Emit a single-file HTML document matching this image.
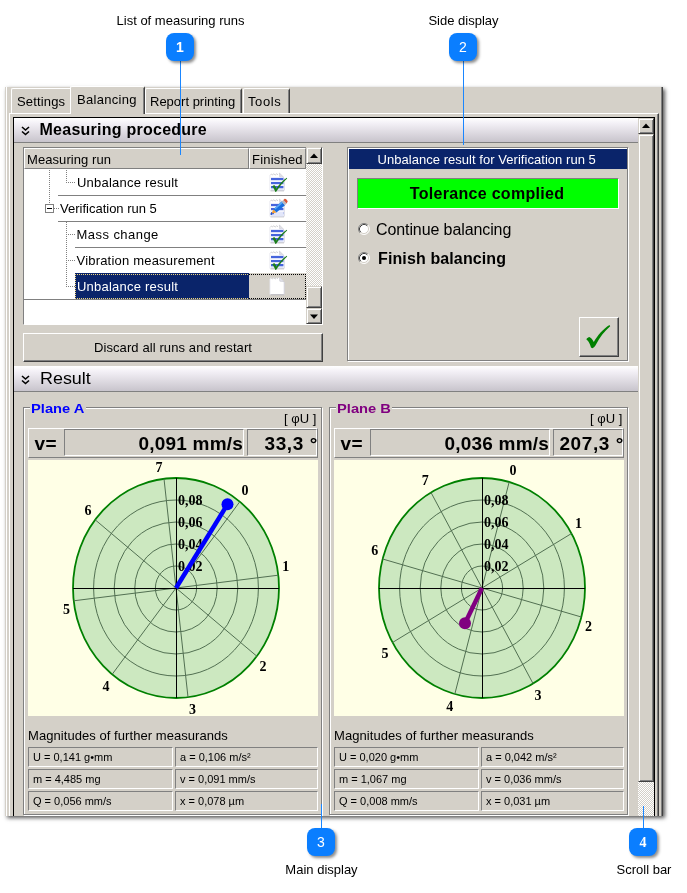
<!DOCTYPE html><html><head><meta charset="utf-8"><title>Balancing</title><style>
*{box-sizing:border-box;margin:0;padding:0}
html,body{width:687px;height:893px;background:#fff;overflow:hidden}
body{position:relative;font-family:"Liberation Sans",sans-serif;font-size:13px;color:#000}
.a{position:absolute}
.t{position:absolute;white-space:nowrap;line-height:1}
.win{left:5px;top:87px;width:658px;height:729px;background:#d4d0c8;box-shadow:2px 2px 4px rgba(0,0,0,.65)}
.cap{font-size:13px;color:#000}
.badge{width:28px;height:28px;border-radius:8px;background:#0a7eff;box-shadow:2px 2px 3px rgba(0,0,0,.45);color:#fff;font-size:14px;text-align:center;line-height:29px}
.ln{width:1px;background:#1a86ff}
.tab{background:#d4d0c8;border-left:1px solid #fff;border-top:1px solid #fff;border-right:1px solid #404040;border-radius:2px 2px 0 0}
.tab:after{content:"";position:absolute;right:0px;top:1px;bottom:0;width:1px;background:#808080}
.hdr{background:linear-gradient(#ffffff,#f3f0f6 22%,#c8c4cc);border-bottom:1px solid #808080}
.sunk{border:1px solid;border-color:#808080 #fff #fff #808080}
.rais{border:1px solid;border-color:#fff #808080 #808080 #fff}
.btn{border:1px solid;border-color:#fff #404040 #404040 #fff;box-shadow:inset -1px -1px 0 #808080;background:#d4d0c8}
.sb{background:#d4d0c8;border:1px solid;border-color:#d4d0c8 #404040 #404040 #d4d0c8;box-shadow:inset 1px 1px 0 #fff,inset -1px -1px 0 #808080}
.track{background-color:#fff;background-image:conic-gradient(#d4d0c8 25%,#fff 0 50%,#d4d0c8 0 75%,#fff 0);background-size:2px 2px}
.cell{height:20px;border:1px solid;border-color:#808080 #fff #fff #808080;font-size:11px}
.cell span{position:absolute;left:4px;top:4px;white-space:nowrap;line-height:1}
</style></head><body>
<div class="a" style="left:0;top:0;width:687px;height:893px;will-change:transform">
<div class="a win"></div>
<div class="a" style="left:6px;top:87px;width:1px;height:729px;background:#fff"></div>
<div class="a" style="left:661px;top:87px;width:1px;height:729px;background:#808080"></div>
<div class="a" style="left:662px;top:87px;width:1px;height:729px;background:#404040"></div>
<div class="a" style="left:9px;top:113px;width:650px;height:703px;border-left:1px solid #fff;border-top:1px solid #fff;border-right:1px solid #404040"></div>
<div class="a" style="left:657px;top:114px;width:1px;height:702px;background:#808080"></div>
<div class="a tab" style="left:11px;top:88px;width:61px;height:25px"></div>
<div class="t" style="left:17px;top:95px;font-size:13px;letter-spacing:0.15px">Settings</div>
<div class="a tab" style="left:145px;top:88px;width:97px;height:25px"></div>
<div class="t" style="left:150px;top:95px;font-size:13px;letter-spacing:0px">Report printing</div>
<div class="a tab" style="left:243px;top:88px;width:47px;height:25px"></div>
<div class="t" style="left:248px;top:95px;font-size:13px;letter-spacing:0.6px">Tools</div>
<div class="a tab" style="left:70px;top:86px;width:75px;height:28px"></div>
<div class="t" style="left:77px;top:93px;font-size:13px;letter-spacing:0.3px">Balancing</div>
<div class="a" style="left:13px;top:117px;width:642px;height:699px;border:1px solid #000;border-bottom:none;background:#d4d0c8"></div>
<div class="a hdr" style="left:14px;top:118px;width:624px;height:25px"></div>
<div class="a hdr" style="left:14px;top:366px;width:624px;height:26px"></div>
<svg class="a" style="left:21px;top:126px" width="9" height="10" viewBox="0 0 9 10"><path d="M1 1 L4.5 4 L8 1 M1 5.5 L4.5 8.5 L8 5.5" fill="none" stroke="#000" stroke-width="1.6"/></svg>
<svg class="a" style="left:21px;top:375px" width="9" height="10" viewBox="0 0 9 10"><path d="M1 1 L4.5 4 L8 1 M1 5.5 L4.5 8.5 L8 5.5" fill="none" stroke="#000" stroke-width="1.6"/></svg>
<div class="t" style="left:39.5px;top:121.5px;font-size:16px;font-weight:bold;letter-spacing:0.25px">Measuring procedure</div>
<div class="t" style="left:39.5px;top:371px;font-size:16px;transform:scaleX(1.12);transform-origin:0 0">Result</div>
<div class="a track" style="left:638px;top:118px;width:16px;height:698px"></div>
<div class="a sb" style="left:638px;top:118px;width:16px;height:16px"></div>
<svg class="a" style="left:641.5px;top:123px" width="9" height="6"><path d="M0 5 L4 0.4 L8 5Z" fill="#000"/></svg>
<div class="a sb" style="left:638px;top:134px;width:16px;height:648px"></div>
<div class="a" style="left:23px;top:147px;width:300px;height:178px;background:#fff;border:1px solid #808080;border-right-color:#fff;border-bottom-color:#fff"></div>
<div class="a" style="left:24px;top:148px;width:225px;height:21px;background:#d4d0c8;border:1px solid;border-color:#fff #808080 #808080 #fff"></div>
<div class="a" style="left:249px;top:148px;width:57px;height:21px;background:#d4d0c8;border:1px solid;border-color:#fff #808080 #808080 #fff"></div>
<div class="t" style="left:27px;top:153px;letter-spacing:0.08px">Measuring run</div>
<div class="t" style="left:252px;top:153px;letter-spacing:0.2px">Finished</div>
<div class="a" style="left:58px;top:195px;width:248px;height:1px;background:#808080"></div>
<div class="a" style="left:58px;top:221px;width:248px;height:1px;background:#808080"></div>
<div class="a" style="left:75px;top:247px;width:231px;height:1px;background:#808080"></div>
<div class="a" style="left:75px;top:273px;width:231px;height:1px;background:#808080"></div>
<div class="a" style="left:24px;top:299px;width:282px;height:1px;background:#808080"></div>
<div class="a" style="left:75px;top:273px;width:174px;height:26px;background:#0a246a"></div>
<div class="a" style="left:249px;top:273px;width:57px;height:26px;background:#d4d0c8"></div>
<div class="a" style="left:75px;top:274px;width:174px;height:1px;background:repeating-linear-gradient(90deg,#f0d880 0 1px,transparent 1px 2px)"></div>
<div class="a" style="left:75px;top:298px;width:174px;height:1px;background:repeating-linear-gradient(90deg,#f0d880 0 1px,transparent 1px 2px)"></div>
<div class="a" style="left:75px;top:274px;width:1px;height:25px;background:repeating-linear-gradient(#f0d880 0 1px,transparent 1px 2px)"></div>
<div class="a" style="left:249px;top:274px;width:57px;height:1px;background:repeating-linear-gradient(90deg,#000 0 1px,transparent 1px 2px)"></div>
<div class="a" style="left:249px;top:298px;width:57px;height:1px;background:repeating-linear-gradient(90deg,#000 0 1px,transparent 1px 2px)"></div>
<div class="a" style="left:305px;top:274px;width:1px;height:25px;background:repeating-linear-gradient(#000 0 1px,transparent 1px 2px)"></div>
<div class="a" style="left:49px;top:170px;width:1px;height:34px;background:repeating-linear-gradient(#808080 0 1px,transparent 1px 2px)"></div>
<div class="a" style="left:66px;top:170px;width:1px;height:13px;background:repeating-linear-gradient(#808080 0 1px,transparent 1px 2px)"></div>
<div class="a" style="left:66px;top:182px;width:9px;height:1px;background:repeating-linear-gradient(90deg,#808080 0 1px,transparent 1px 2px)"></div>
<div class="a" style="left:54px;top:208px;width:5px;height:1px;background:repeating-linear-gradient(90deg,#808080 0 1px,transparent 1px 2px)"></div>
<div class="a" style="left:66px;top:222px;width:1px;height:65px;background:repeating-linear-gradient(#808080 0 1px,transparent 1px 2px)"></div>
<div class="a" style="left:66px;top:234px;width:9px;height:1px;background:repeating-linear-gradient(90deg,#808080 0 1px,transparent 1px 2px)"></div>
<div class="a" style="left:66px;top:260px;width:9px;height:1px;background:repeating-linear-gradient(90deg,#808080 0 1px,transparent 1px 2px)"></div>
<div class="a" style="left:66px;top:286px;width:9px;height:1px;background:repeating-linear-gradient(90deg,#808080 0 1px,transparent 1px 2px)"></div>
<div class="a" style="left:45px;top:204px;width:9px;height:9px;border:1px solid #808080;background:#fff"></div>
<div class="a" style="left:47px;top:208px;width:5px;height:1px;background:#000"></div>
<div class="t" style="left:77px;top:176px;color:#000;letter-spacing:0.22px">Unbalance result</div>
<div class="t" style="left:60px;top:202px;color:#000;letter-spacing:0px">Verification run 5</div>
<div class="t" style="left:76.5px;top:228px;color:#000;letter-spacing:0.45px">Mass change</div>
<div class="t" style="left:76.5px;top:254px;color:#000;letter-spacing:0.2px">Vibration measurement</div>
<div class="t" style="left:77px;top:280px;color:#fff;letter-spacing:0.22px">Unbalance result</div>
<svg class="a" style="left:269px;top:172px" width="20" height="21" viewBox="0 0 20 21"><path d="M1 2.2 L2.2 1.4 L3.4 2.4 L4.8 1.2 L6.2 2.4 L7.6 1.2 L9 2.2 L10.4 1 L15 5.6 V18.6 H1Z" fill="#fff"/><path d="M1.5 18.8 H15" stroke="#b4b4bc" stroke-width="1" fill="none"/><path d="M15.2 6 V18.5" stroke="#d4d4e0" stroke-width="1" fill="none"/><path d="M0.9 3 V18.5" stroke="#e4e4ec" stroke-width="0.8" fill="none"/><path d="M10.4 1 L10.8 5.2 L15 5.6Z" fill="#e2e2ea" stroke="#c4c4cc" stroke-width="0.6"/><path d="M1.5 2.6 L2.4 2 L3.4 3 L4.8 1.8 L6.2 3 L7.6 1.8 L9 2.8" stroke="#c4c4c8" stroke-width="0.8" fill="none"/><rect x="2" y="5.2" width="12.4" height="13" fill="#e2e6fa"/><rect x="2" y="6" width="12.4" height="2.2" fill="#4564dc"/><rect x="2" y="10" width="12.4" height="2.2" fill="#4564dc"/><rect x="2" y="14" width="12.4" height="2.2" fill="#4564dc"/><rect x="2" y="8.6" width="12.4" height="1" fill="#fff"/><rect x="2" y="12.6" width="12.4" height="1" fill="#fff"/><path d="M3.2 14.6 C4 13.6 5 13.2 5.8 13.4 C6.6 14.4 7 15.4 7.4 16.6 C10 12.5 13.5 8.5 17.8 5.8 L18.2 6.4 C14 10.2 10 15 7 20 L6.2 19.8 C5.6 17.8 4.6 16 3.2 14.6Z" fill="#1b7d1b"/></svg>
<svg class="a" style="left:269px;top:198px" width="20" height="21" viewBox="0 0 20 21"><path d="M1 2.2 L2.2 1.4 L3.4 2.4 L4.8 1.2 L6.2 2.4 L7.6 1.2 L9 2.2 L10.4 1 L15 5.6 V18.6 H1Z" fill="#fff"/><path d="M1.5 18.8 H15" stroke="#b4b4bc" stroke-width="1" fill="none"/><path d="M15.2 6 V18.5" stroke="#d4d4e0" stroke-width="1" fill="none"/><path d="M0.9 3 V18.5" stroke="#e4e4ec" stroke-width="0.8" fill="none"/><path d="M10.4 1 L10.8 5.2 L15 5.6Z" fill="#e2e2ea" stroke="#c4c4cc" stroke-width="0.6"/><path d="M1.5 2.6 L2.4 2 L3.4 3 L4.8 1.8 L6.2 3 L7.6 1.8 L9 2.8" stroke="#c4c4c8" stroke-width="0.8" fill="none"/><rect x="2" y="5.2" width="12.4" height="13" fill="#e2e6fa"/><rect x="2" y="6" width="12.4" height="2.2" fill="#4564dc"/><rect x="2" y="10" width="12.4" height="2.2" fill="#4564dc"/><rect x="2" y="14" width="12.4" height="2.2" fill="#4564dc"/><rect x="2" y="8.6" width="12.4" height="1" fill="#fff"/><rect x="2" y="12.6" width="12.4" height="1" fill="#fff"/><rect x="2" y="14" width="12.4" height="4.4" fill="#e2e6fa"/><rect x="2" y="14" width="3" height="2.2" fill="#4564dc"/><path d="M4.2 11.4 L12.6 3.6 L16 7.2 L7.4 14.6Z" fill="#1a6fe0"/><path d="M5.4 10.3 L13.4 2.9 L14.6 4.2 L6.3 11.6Z" fill="#58a8f4"/><path d="M12.6 3.6 L14.4 2 L17.6 5.6 L16 7.2Z" fill="#b8b8c0"/><path d="M14.4 2 L15.6 0.8 C17 0.6 18.6 2.4 18.6 3.6 L17.6 5.6Z" fill="#d85838"/><path d="M4.2 11.4 L7.4 14.6 L2.6 15.6Z" fill="#f4a030"/><circle cx="2.4" cy="16" r="1" fill="#2050c8"/></svg>
<svg class="a" style="left:269px;top:224px" width="20" height="21" viewBox="0 0 20 21"><path d="M1 2.2 L2.2 1.4 L3.4 2.4 L4.8 1.2 L6.2 2.4 L7.6 1.2 L9 2.2 L10.4 1 L15 5.6 V18.6 H1Z" fill="#fff"/><path d="M1.5 18.8 H15" stroke="#b4b4bc" stroke-width="1" fill="none"/><path d="M15.2 6 V18.5" stroke="#d4d4e0" stroke-width="1" fill="none"/><path d="M0.9 3 V18.5" stroke="#e4e4ec" stroke-width="0.8" fill="none"/><path d="M10.4 1 L10.8 5.2 L15 5.6Z" fill="#e2e2ea" stroke="#c4c4cc" stroke-width="0.6"/><path d="M1.5 2.6 L2.4 2 L3.4 3 L4.8 1.8 L6.2 3 L7.6 1.8 L9 2.8" stroke="#c4c4c8" stroke-width="0.8" fill="none"/><rect x="2" y="5.2" width="12.4" height="13" fill="#e2e6fa"/><rect x="2" y="6" width="12.4" height="2.2" fill="#4564dc"/><rect x="2" y="10" width="12.4" height="2.2" fill="#4564dc"/><rect x="2" y="14" width="12.4" height="2.2" fill="#4564dc"/><rect x="2" y="8.6" width="12.4" height="1" fill="#fff"/><rect x="2" y="12.6" width="12.4" height="1" fill="#fff"/><path d="M3.2 14.6 C4 13.6 5 13.2 5.8 13.4 C6.6 14.4 7 15.4 7.4 16.6 C10 12.5 13.5 8.5 17.8 5.8 L18.2 6.4 C14 10.2 10 15 7 20 L6.2 19.8 C5.6 17.8 4.6 16 3.2 14.6Z" fill="#1b7d1b"/></svg>
<svg class="a" style="left:269px;top:250px" width="20" height="21" viewBox="0 0 20 21"><path d="M1 2.2 L2.2 1.4 L3.4 2.4 L4.8 1.2 L6.2 2.4 L7.6 1.2 L9 2.2 L10.4 1 L15 5.6 V18.6 H1Z" fill="#fff"/><path d="M1.5 18.8 H15" stroke="#b4b4bc" stroke-width="1" fill="none"/><path d="M15.2 6 V18.5" stroke="#d4d4e0" stroke-width="1" fill="none"/><path d="M0.9 3 V18.5" stroke="#e4e4ec" stroke-width="0.8" fill="none"/><path d="M10.4 1 L10.8 5.2 L15 5.6Z" fill="#e2e2ea" stroke="#c4c4cc" stroke-width="0.6"/><path d="M1.5 2.6 L2.4 2 L3.4 3 L4.8 1.8 L6.2 3 L7.6 1.8 L9 2.8" stroke="#c4c4c8" stroke-width="0.8" fill="none"/><rect x="2" y="5.2" width="12.4" height="13" fill="#e2e6fa"/><rect x="2" y="6" width="12.4" height="2.2" fill="#4564dc"/><rect x="2" y="10" width="12.4" height="2.2" fill="#4564dc"/><rect x="2" y="14" width="12.4" height="2.2" fill="#4564dc"/><rect x="2" y="8.6" width="12.4" height="1" fill="#fff"/><rect x="2" y="12.6" width="12.4" height="1" fill="#fff"/><path d="M3.2 14.6 C4 13.6 5 13.2 5.8 13.4 C6.6 14.4 7 15.4 7.4 16.6 C10 12.5 13.5 8.5 17.8 5.8 L18.2 6.4 C14 10.2 10 15 7 20 L6.2 19.8 C5.6 17.8 4.6 16 3.2 14.6Z" fill="#1b7d1b"/></svg>
<svg class="a" style="left:269px;top:276px" width="20" height="21" viewBox="0 0 20 21"><path d="M1 2.2 L2.2 1.4 L3.4 2.4 L4.8 1.2 L6.2 2.4 L7.6 1.2 L9 2.2 L10.4 1 L15 5.6 V18.6 H1Z" fill="#fff"/><path d="M1.5 18.8 H15" stroke="#b4b4bc" stroke-width="1" fill="none"/><path d="M15.2 6 V18.5" stroke="#d4d4e0" stroke-width="1" fill="none"/><path d="M0.9 3 V18.5" stroke="#e4e4ec" stroke-width="0.8" fill="none"/><path d="M10.4 1 L10.8 5.2 L15 5.6Z" fill="#e2e2ea" stroke="#c4c4cc" stroke-width="0.6"/><path d="M1.5 2.6 L2.4 2 L3.4 3 L4.8 1.8 L6.2 3 L7.6 1.8 L9 2.8" stroke="#c4c4c8" stroke-width="0.8" fill="none"/></svg>
<div class="a track" style="left:306px;top:148px;width:16px;height:176px"></div>
<div class="a sb" style="left:306px;top:147px;width:16px;height:17px"></div>
<svg class="a" style="left:309.5px;top:152.5px" width="9" height="6"><path d="M0 5 L4 0.4 L8 5Z" fill="#000"/></svg>
<div class="a sb" style="left:306px;top:286px;width:16px;height:22px"></div>
<div class="a sb" style="left:306px;top:308px;width:16px;height:16px"></div>
<svg class="a" style="left:309.5px;top:313.5px" width="9" height="6"><path d="M0 0.5 L4 5.1 L8 0.5Z" fill="#000"/></svg>
<div class="a btn" style="left:23px;top:333px;width:300px;height:29px"></div>
<div class="t" style="left:23px;width:300px;text-align:center;top:341px;letter-spacing:0.1px">Discard all runs and restart</div>
<div class="a" style="left:347px;top:147px;width:281px;height:214px;border:1px solid #808080;box-shadow:inset 1px 1px 0 #fff,1px 1px 0 #fff"></div>
<div class="a" style="left:349px;top:149px;width:278px;height:20px;background:#0a246a"></div>
<div class="t" style="left:377.5px;top:153px;color:#fff;letter-spacing:0.04px">Unbalance result for Verification run 5</div>
<div class="a" style="left:357px;top:178px;width:262px;height:31px;background:#00ff00;border:1px solid;border-color:#808080 #fff #fff #808080"></div>
<div class="t" style="left:409.8px;top:186px;font-size:16px;font-weight:bold;letter-spacing:0.3px">Tolerance complied</div>
<svg class="a" style="left:357px;top:222px" width="14" height="14" viewBox="0 0 14 14"><circle cx="7" cy="7" r="5" fill="#fff"/><path d="M3.11 10.89 A5.5 5.5 0 0 1 10.89 3.11" fill="none" stroke="#808080" stroke-width="1"/><path d="M10.89 3.11 A5.5 5.5 0 0 1 3.11 10.89" fill="none" stroke="#fff" stroke-width="1"/><path d="M3.82 10.18 A4.5 4.5 0 0 1 10.18 3.82" fill="none" stroke="#404040" stroke-width="1"/><path d="M10.18 3.82 A4.5 4.5 0 0 1 3.82 10.18" fill="none" stroke="#d4d0c8" stroke-width="1"/></svg>
<svg class="a" style="left:357px;top:251px" width="14" height="14" viewBox="0 0 14 14"><circle cx="7" cy="7" r="5" fill="#fff"/><path d="M3.11 10.89 A5.5 5.5 0 0 1 10.89 3.11" fill="none" stroke="#808080" stroke-width="1"/><path d="M10.89 3.11 A5.5 5.5 0 0 1 3.11 10.89" fill="none" stroke="#fff" stroke-width="1"/><path d="M3.82 10.18 A4.5 4.5 0 0 1 10.18 3.82" fill="none" stroke="#404040" stroke-width="1"/><path d="M10.18 3.82 A4.5 4.5 0 0 1 3.82 10.18" fill="none" stroke="#d4d0c8" stroke-width="1"/><circle cx="7" cy="7" r="2" fill="#000"/></svg>
<div class="t" style="left:376px;top:222px;font-size:16px;letter-spacing:-0.1px">Continue balancing</div>
<div class="t" style="left:378px;top:251px;font-size:16px;font-weight:bold;letter-spacing:0.12px">Finish balancing</div>
<div class="a btn" style="left:579px;top:317px;width:40px;height:40px"></div>
<svg class="a" style="left:584px;top:322px" width="30" height="30" viewBox="0 0 30 30"><path d="M2.3 17.2 C3.3 15.8 4.5 15 5.3 14.9 C7 15.5 8.5 17.5 9.8 20 C13.5 13.5 19 7 25.5 3 L26.2 4.2 C20.5 9 15.5 15.5 12.3 22 C11 24.5 9.5 26 8.4 26.2 L7 25.5 C6.3 23 5.3 20.8 4.2 19.3 C3.6 18.4 3 17.7 2.3 17.2Z" fill="#008000"/></svg>
<div class="a" style="left:23px;top:407px;width:299px;height:408px;border:1px solid #808080;box-shadow:inset 1px 1px 0 #fff,1px 1px 0 #fff"></div>
<div class="a" style="left:30px;top:400px;width:56px;height:16px;background:#d4d0c8"></div>
<div class="t" style="left:30.5px;top:402px;font-weight:bold;color:#0000ff;transform:scaleX(1.13);transform-origin:0 0">Plane A</div>
<div class="t" style="left:284px;top:412px;letter-spacing:0px">[ φU ]</div>
<div class="a rais" style="left:28px;top:428px;width:290px;height:30px"></div>
<div class="a sunk" style="left:64px;top:429px;width:180px;height:27px"></div>
<div class="a sunk" style="left:247px;top:429px;width:70px;height:27px"></div>
<div class="t" style="left:34.5px;top:434px;font-size:19px;font-weight:bold;letter-spacing:0.5px">v=</div>
<div class="t" style="left:64px;width:179px;text-align:right;top:434px;font-size:19px;font-weight:bold;letter-spacing:0.2px">0,091 mm/s</div>
<div class="t" style="left:247px;width:71px;text-align:right;top:434px;font-size:19px;font-weight:bold;letter-spacing:0.6px">33,3 °</div>
<svg class="a" style="left:28px;top:460px" width="290" height="256" viewBox="0 0 290 256"><rect width="290" height="256" fill="#ffffe6"/><ellipse cx="148" cy="128" rx="103" ry="110" fill="#cce8c0" stroke="#008000" stroke-width="1.8"/><ellipse cx="148" cy="128" rx="20.6" ry="22.0" fill="none" stroke="#527052" stroke-width="1"/><ellipse cx="148" cy="128" rx="41.2" ry="44.0" fill="none" stroke="#527052" stroke-width="1"/><ellipse cx="148" cy="128" rx="61.8" ry="66.0" fill="none" stroke="#527052" stroke-width="1"/><ellipse cx="148" cy="128" rx="82.4" ry="88.0" fill="none" stroke="#527052" stroke-width="1"/><line x1="148" y1="128" x2="211.8" y2="41.7" stroke="#527052" stroke-width="1"/><line x1="148" y1="128" x2="250.3" y2="115.2" stroke="#527052" stroke-width="1"/><line x1="148" y1="128" x2="228.8" y2="196.2" stroke="#527052" stroke-width="1"/><line x1="148" y1="128" x2="160.0" y2="237.2" stroke="#527052" stroke-width="1"/><line x1="148" y1="128" x2="84.2" y2="214.3" stroke="#527052" stroke-width="1"/><line x1="148" y1="128" x2="45.7" y2="140.8" stroke="#527052" stroke-width="1"/><line x1="148" y1="128" x2="67.2" y2="59.8" stroke="#527052" stroke-width="1"/><line x1="148" y1="128" x2="136.0" y2="18.8" stroke="#527052" stroke-width="1"/><line x1="45" y1="128.5" x2="251" y2="128.5" stroke="#000" stroke-width="1"/><line x1="148.5" y1="18" x2="148.5" y2="238" stroke="#000" stroke-width="1"/><text x="150" y="110.5" font-family="Liberation Serif,serif" font-weight="bold" font-size="14">0,02</text><text x="150" y="88.5" font-family="Liberation Serif,serif" font-weight="bold" font-size="14">0,04</text><text x="150" y="66.5" font-family="Liberation Serif,serif" font-weight="bold" font-size="14">0,06</text><text x="150" y="44.5" font-family="Liberation Serif,serif" font-weight="bold" font-size="14">0,08</text><line x1="148" y1="128" x2="199.5" y2="44.3" stroke="#0000ff" stroke-width="4.5"/><circle cx="199.5" cy="44.3" r="6" fill="#0000ff"/><text x="217" y="34.5" text-anchor="middle" font-family="Liberation Serif,serif" font-weight="bold" font-size="14">0</text><text x="257.7" y="111.0" text-anchor="middle" font-family="Liberation Serif,serif" font-weight="bold" font-size="14">1</text><text x="235" y="210.5" text-anchor="middle" font-family="Liberation Serif,serif" font-weight="bold" font-size="14">2</text><text x="164.6" y="253.5" text-anchor="middle" font-family="Liberation Serif,serif" font-weight="bold" font-size="14">3</text><text x="78" y="230.89999999999998" text-anchor="middle" font-family="Liberation Serif,serif" font-weight="bold" font-size="14">4</text><text x="38.400000000000006" y="154.29999999999995" text-anchor="middle" font-family="Liberation Serif,serif" font-weight="bold" font-size="14">5</text><text x="60" y="54.89999999999998" text-anchor="middle" font-family="Liberation Serif,serif" font-weight="bold" font-size="14">6</text><text x="131" y="11.5" text-anchor="middle" font-family="Liberation Serif,serif" font-weight="bold" font-size="14">7</text></svg>
<div class="t" style="left:28px;top:729px;letter-spacing:0.06px">Magnitudes of further measurands</div>
<div class="a cell" style="left:28px;top:747px;width:145px"><span>U = 0,141 g•mm</span></div>
<div class="a cell" style="left:175px;top:747px;width:143px"><span>a = 0,106 m/s²</span></div>
<div class="a cell" style="left:28px;top:769px;width:145px"><span>m = 4,485 mg</span></div>
<div class="a cell" style="left:175px;top:769px;width:143px"><span>v = 0,091 mm/s</span></div>
<div class="a cell" style="left:28px;top:791px;width:145px"><span>Q = 0,056 mm/s</span></div>
<div class="a cell" style="left:175px;top:791px;width:143px"><span>x = 0,078 µm</span></div>
<div class="a" style="left:329px;top:407px;width:299px;height:408px;border:1px solid #808080;box-shadow:inset 1px 1px 0 #fff,1px 1px 0 #fff"></div>
<div class="a" style="left:336px;top:400px;width:56px;height:16px;background:#d4d0c8"></div>
<div class="t" style="left:336.5px;top:402px;font-weight:bold;color:#800080;transform:scaleX(1.13);transform-origin:0 0">Plane B</div>
<div class="t" style="left:590px;top:412px;letter-spacing:0px">[ φU ]</div>
<div class="a rais" style="left:334px;top:428px;width:290px;height:30px"></div>
<div class="a sunk" style="left:370px;top:429px;width:180px;height:27px"></div>
<div class="a sunk" style="left:553px;top:429px;width:70px;height:27px"></div>
<div class="t" style="left:340.5px;top:434px;font-size:19px;font-weight:bold;letter-spacing:0.5px">v=</div>
<div class="t" style="left:370px;width:179px;text-align:right;top:434px;font-size:19px;font-weight:bold;letter-spacing:0.2px">0,036 mm/s</div>
<div class="t" style="left:553px;width:71px;text-align:right;top:434px;font-size:19px;font-weight:bold;letter-spacing:0.6px">207,3 °</div>
<svg class="a" style="left:334px;top:460px" width="290" height="256" viewBox="0 0 290 256"><rect width="290" height="256" fill="#ffffe6"/><ellipse cx="148" cy="128" rx="103" ry="110" fill="#cce8c0" stroke="#008000" stroke-width="1.8"/><ellipse cx="148" cy="128" rx="20.6" ry="22.0" fill="none" stroke="#527052" stroke-width="1"/><ellipse cx="148" cy="128" rx="41.2" ry="44.0" fill="none" stroke="#527052" stroke-width="1"/><ellipse cx="148" cy="128" rx="61.8" ry="66.0" fill="none" stroke="#527052" stroke-width="1"/><ellipse cx="148" cy="128" rx="82.4" ry="88.0" fill="none" stroke="#527052" stroke-width="1"/><line x1="148" y1="128" x2="175.2" y2="21.9" stroke="#527052" stroke-width="1"/><line x1="148" y1="128" x2="237.5" y2="73.5" stroke="#527052" stroke-width="1"/><line x1="148" y1="128" x2="247.3" y2="157.0" stroke="#527052" stroke-width="1"/><line x1="148" y1="128" x2="199.0" y2="223.5" stroke="#527052" stroke-width="1"/><line x1="148" y1="128" x2="120.8" y2="234.1" stroke="#527052" stroke-width="1"/><line x1="148" y1="128" x2="58.5" y2="182.5" stroke="#527052" stroke-width="1"/><line x1="148" y1="128" x2="48.7" y2="99.0" stroke="#527052" stroke-width="1"/><line x1="148" y1="128" x2="97.0" y2="32.5" stroke="#527052" stroke-width="1"/><line x1="45" y1="128.5" x2="251" y2="128.5" stroke="#000" stroke-width="1"/><line x1="148.5" y1="18" x2="148.5" y2="238" stroke="#000" stroke-width="1"/><text x="150" y="110.5" font-family="Liberation Serif,serif" font-weight="bold" font-size="14">0,02</text><text x="150" y="88.5" font-family="Liberation Serif,serif" font-weight="bold" font-size="14">0,04</text><text x="150" y="66.5" font-family="Liberation Serif,serif" font-weight="bold" font-size="14">0,06</text><text x="150" y="44.5" font-family="Liberation Serif,serif" font-weight="bold" font-size="14">0,08</text><line x1="148" y1="128" x2="131.0" y2="163.2" stroke="#800080" stroke-width="4.5"/><circle cx="131.0" cy="163.2" r="6" fill="#800080"/><text x="179" y="14.5" text-anchor="middle" font-family="Liberation Serif,serif" font-weight="bold" font-size="14">0</text><text x="244.60000000000002" y="67.70000000000005" text-anchor="middle" font-family="Liberation Serif,serif" font-weight="bold" font-size="14">1</text><text x="254.60000000000002" y="170.5" text-anchor="middle" font-family="Liberation Serif,serif" font-weight="bold" font-size="14">2</text><text x="204" y="239.5" text-anchor="middle" font-family="Liberation Serif,serif" font-weight="bold" font-size="14">3</text><text x="115.69999999999999" y="251.10000000000002" text-anchor="middle" font-family="Liberation Serif,serif" font-weight="bold" font-size="14">4</text><text x="51" y="197.5" text-anchor="middle" font-family="Liberation Serif,serif" font-weight="bold" font-size="14">5</text><text x="40.80000000000001" y="95.0" text-anchor="middle" font-family="Liberation Serif,serif" font-weight="bold" font-size="14">6</text><text x="91.30000000000001" y="25.100000000000023" text-anchor="middle" font-family="Liberation Serif,serif" font-weight="bold" font-size="14">7</text></svg>
<div class="t" style="left:334px;top:729px;letter-spacing:0.06px">Magnitudes of further measurands</div>
<div class="a cell" style="left:334px;top:747px;width:145px"><span>U = 0,020 g•mm</span></div>
<div class="a cell" style="left:481px;top:747px;width:143px"><span>a = 0,042 m/s²</span></div>
<div class="a cell" style="left:334px;top:769px;width:145px"><span>m = 1,067 mg</span></div>
<div class="a cell" style="left:481px;top:769px;width:143px"><span>v = 0,036 mm/s</span></div>
<div class="a cell" style="left:334px;top:791px;width:145px"><span>Q = 0,008 mm/s</span></div>
<div class="a cell" style="left:481px;top:791px;width:143px"><span>x = 0,031 µm</span></div>
<div class="t cap" style="left:30.5px;width:300px;text-align:center;top:14px;letter-spacing:0px">List of measuring runs</div>
<div class="t cap" style="left:313.5px;width:300px;text-align:center;top:14px;letter-spacing:0px">Side display</div>
<div class="t cap" style="left:171.5px;width:300px;text-align:center;top:863px;letter-spacing:0px">Main display</div>
<div class="t cap" style="left:494px;width:300px;text-align:center;top:863px;letter-spacing:0px">Scroll bar</div>
<div class="a ln" style="left:180px;top:61px;height:94px"></div>
<div class="a ln" style="left:463px;top:61px;height:84px"></div>
<div class="a ln" style="left:321px;top:804px;height:24px"></div>
<div class="a ln" style="left:643px;top:806px;height:22px"></div>
<div class="a badge" style="left:166px;top:33px;font-weight:bold">1</div>
<div class="a badge" style="left:449px;top:33px;">2</div>
<div class="a badge" style="left:307px;top:828px;">3</div>
<div class="a badge" style="left:629px;top:828px;font-weight:bold;font-family:Liberation Serif,serif;font-size:14px">4</div>
</div>
</body></html>
